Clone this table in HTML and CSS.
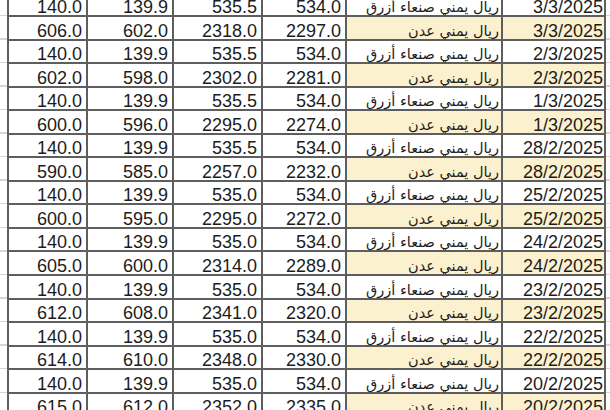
FILE: index.html
```html
<!DOCTYPE html>
<html lang="ar">
<head>
<meta charset="utf-8">
<title>أسعار الصرف</title>
<link rel="stylesheet" href="styles.css">
</head>
<body>
<div class="sheet">
  <div class="grid">
    <div class="c n">140.0</div><div class="c n">139.9</div><div class="c n">535.5</div><div class="c n">534.0</div><div class="c a"><span dir="rtl">ريال يمني صنعاء أزرق</span></div><div class="c d">3/3/2025</div>
    <div class="c n">606.0</div><div class="c n">602.0</div><div class="c n">2318.0</div><div class="c n">2297.0</div><div class="c a y"><span dir="rtl">ريال يمني عدن</span></div><div class="c d y">3/3/2025</div>
    <div class="c n">140.0</div><div class="c n">139.9</div><div class="c n">535.5</div><div class="c n">534.0</div><div class="c a"><span dir="rtl">ريال يمني صنعاء أزرق</span></div><div class="c d">2/3/2025</div>
    <div class="c n">602.0</div><div class="c n">598.0</div><div class="c n">2302.0</div><div class="c n">2281.0</div><div class="c a y"><span dir="rtl">ريال يمني عدن</span></div><div class="c d y">2/3/2025</div>
    <div class="c n">140.0</div><div class="c n">139.9</div><div class="c n">535.5</div><div class="c n">534.0</div><div class="c a"><span dir="rtl">ريال يمني صنعاء أزرق</span></div><div class="c d">1/3/2025</div>
    <div class="c n">600.0</div><div class="c n">596.0</div><div class="c n">2295.0</div><div class="c n">2274.0</div><div class="c a y"><span dir="rtl">ريال يمني عدن</span></div><div class="c d y">1/3/2025</div>
    <div class="c n">140.0</div><div class="c n">139.9</div><div class="c n">535.5</div><div class="c n">534.0</div><div class="c a"><span dir="rtl">ريال يمني صنعاء أزرق</span></div><div class="c d">28/2/2025</div>
    <div class="c n">590.0</div><div class="c n">585.0</div><div class="c n">2257.0</div><div class="c n">2232.0</div><div class="c a y"><span dir="rtl">ريال يمني عدن</span></div><div class="c d y">28/2/2025</div>
    <div class="c n">140.0</div><div class="c n">139.9</div><div class="c n">535.0</div><div class="c n">534.0</div><div class="c a"><span dir="rtl">ريال يمني صنعاء أزرق</span></div><div class="c d">25/2/2025</div>
    <div class="c n">600.0</div><div class="c n">595.0</div><div class="c n">2295.0</div><div class="c n">2272.0</div><div class="c a y"><span dir="rtl">ريال يمني عدن</span></div><div class="c d y">25/2/2025</div>
    <div class="c n">140.0</div><div class="c n">139.9</div><div class="c n">535.0</div><div class="c n">534.0</div><div class="c a"><span dir="rtl">ريال يمني صنعاء أزرق</span></div><div class="c d">24/2/2025</div>
    <div class="c n">605.0</div><div class="c n">600.0</div><div class="c n">2314.0</div><div class="c n">2289.0</div><div class="c a y"><span dir="rtl">ريال يمني عدن</span></div><div class="c d y">24/2/2025</div>
    <div class="c n">140.0</div><div class="c n">139.9</div><div class="c n">535.0</div><div class="c n">534.0</div><div class="c a"><span dir="rtl">ريال يمني صنعاء أزرق</span></div><div class="c d">23/2/2025</div>
    <div class="c n">612.0</div><div class="c n">608.0</div><div class="c n">2341.0</div><div class="c n">2320.0</div><div class="c a y"><span dir="rtl">ريال يمني عدن</span></div><div class="c d y">23/2/2025</div>
    <div class="c n">140.0</div><div class="c n">139.9</div><div class="c n">535.0</div><div class="c n">534.0</div><div class="c a"><span dir="rtl">ريال يمني صنعاء أزرق</span></div><div class="c d">22/2/2025</div>
    <div class="c n">614.0</div><div class="c n">610.0</div><div class="c n">2348.0</div><div class="c n">2330.0</div><div class="c a y"><span dir="rtl">ريال يمني عدن</span></div><div class="c d y">22/2/2025</div>
    <div class="c n">140.0</div><div class="c n">139.9</div><div class="c n">535.0</div><div class="c n">534.0</div><div class="c a"><span dir="rtl">ريال يمني صنعاء أزرق</span></div><div class="c d">20/2/2025</div>
    <div class="c n">615.0</div><div class="c n">612.0</div><div class="c n">2352.0</div><div class="c n">2335.0</div><div class="c a y"><span dir="rtl">ريال يمني عدن</span></div><div class="c d y">20/2/2025</div>
  </div>
</div>
</body>
</html>
```

FILE: styles.css
```css
html, body {
  margin: 0;
  padding: 0;
  background: #ffffff;
  overflow: hidden;
}

.sheet {
  margin-top: -8.56px;
  padding-left: 7px;
  height: 440px;
  background: repeating-linear-gradient(to bottom, #d6d6d6 0, #d6d6d6 1.4px, #ffffff 1.4px, #ffffff 23.56px);
}

.grid {
  display: grid;
  grid-template-columns: 77px 84px 87px 82px 154px 101px;
  grid-auto-rows: 21.56px;
  gap: 2px;
  padding: 2px;
  width: fit-content;
  background: #5e5e5e;
}

.c {
  background: #ffffff;
  display: flex;
  align-items: flex-end;
  justify-content: flex-end;
  font-family: "Liberation Sans", Arial, sans-serif;
  font-size: 18px;
  line-height: 15px;
  color: #1c1c1c;
  white-space: nowrap;
}

.n {
  padding-right: 4px;
}

.d {
  padding-right: 1px;
}

.a {
  padding-right: 2px;
  font-family: "DejaVu Sans", sans-serif;
  font-size: 14.5px;
}

.y {
  background: #fcf1cf;
}
```
